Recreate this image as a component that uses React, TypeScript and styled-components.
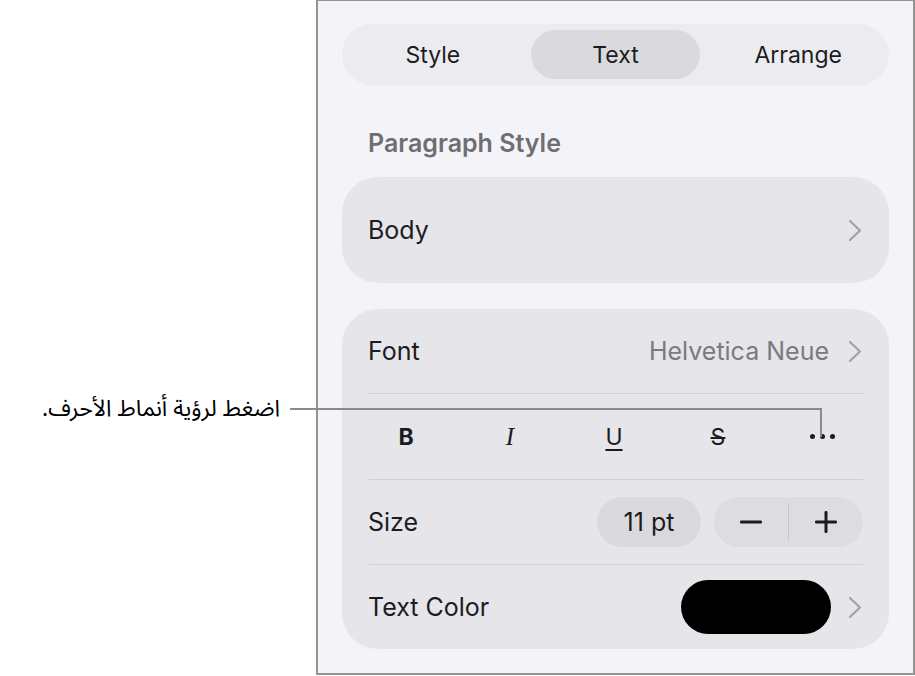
import React from "react";
import styled, { createGlobalStyle, css } from "styled-components";

const GlobalStyle = createGlobalStyle`
  html, body {
    margin: 0;
    padding: 0;
    background: #ffffff;
  }
  body {
    font-family: Inter, "Liberation Sans", sans-serif;
    color: #1c1c1e;
    -webkit-font-smoothing: antialiased;
  }
`;

const Page = styled.div`
  position: relative;
  display: flex;
  width: 915px;
  height: 676px;
  overflow: hidden;
`;

const CalloutColumn = styled.div`
  width: 316px;
  flex-shrink: 0;
  box-sizing: border-box;
  padding: 392px 36px 0 0;
`;

const CalloutText = styled.p`
  margin: 0;
  direction: rtl;
  text-align: right;
  font-family: "Noto Sans Arabic", "DejaVu Sans", sans-serif;
  font-size: 23px;
  line-height: 34px;
  color: #000000;
`;

// leader line from the callout to the "more" button
const Leader = styled.div`
  position: absolute;
  left: 290px;
  top: 408px;
  width: 530px;
  height: 27px;
  border-top: 2px solid #8a8a8a;
  border-right: 2px solid #8a8a8a;
`;

const Panel = styled.aside`
  width: 599px;
  height: 675px;
  box-sizing: border-box;
  border: 2px solid #939393;
  border-top-width: 1px;
  background: #f4f4f8;
  padding: 23px 24px 0;
  display: flex;
  flex-direction: column;
`;

const Segmented = styled.div`
  display: grid;
  grid-template-columns: repeat(3, 1fr);
  gap: 13px;
  height: 61px;
  box-sizing: border-box;
  padding: 6px;
  border-radius: 31px;
  background: #ececf0;
`;

const Segment = styled.div<{ $active?: boolean }>`
  display: flex;
  align-items: center;
  justify-content: center;
  border-radius: 25px;
  font-size: 23px;
  font-weight: 400;
  color: #1c1c1e;
  background: ${(p) => (p.$active ? "#d9d9de" : "transparent")};
`;

const SectionTitle = styled.h3`
  margin: 42px 0 18px 26px;
  font-size: 25px;
  line-height: 32px;
  font-weight: 600;
  color: #6e6e73;
`;

const Card = styled.div<{ $gapTop?: number }>`
  margin-top: ${(p) => p.$gapTop ?? 0}px;
  background: #e5e5ea;
  border-radius: 36px;
  overflow: hidden;
`;

const Row = styled.div<{ $height: number }>`
  display: flex;
  align-items: center;
  height: ${(p) => p.$height}px;
  padding: 0 27px 0 26px;
  font-size: 25px;
  color: #1c1c1e;
`;

const Label = styled.span`
  flex: 1;
`;

const Value = styled.span`
  color: #7a7a7f;
  margin-right: 19px;
`;

const Divider = styled.div`
  height: 1px;
  margin: 0 26px 0 27px;
  background: #d1d1d6;
`;

const FormatRow = styled.div`
  display: grid;
  grid-template-columns: repeat(5, 104px);
  align-items: center;
  justify-items: center;
  height: 85px;
  padding-left: 12px;
`;

const glyphVariants = {
  bold: css`
    font-family: Inter, "Liberation Sans", sans-serif;
    font-weight: 700;
    font-size: 23px;
  `,
  italic: css`
    font-family: "Liberation Serif", serif;
    font-style: italic;
    font-size: 25px;
  `,
  underline: css`
    font-family: Inter, "Liberation Sans", sans-serif;
    font-size: 23px;
    text-decoration: underline;
    text-decoration-thickness: 2px;
    text-underline-offset: 4px;
  `,
  strike: css`
    font-family: Inter, "Liberation Sans", sans-serif;
    font-size: 23px;
    text-decoration: line-through;
    text-decoration-thickness: 2px;
  `,
};

const Glyph = styled.span<{ $variant: keyof typeof glyphVariants }>`
  color: #1c1c1e;
  line-height: 30px;
  ${(p) => glyphVariants[p.$variant]}
`;

const Dots = styled.span`
  display: flex;
  gap: 5px;
  margin-top: 0;
`;

const Dot = styled.span`
  width: 5px;
  height: 5px;
  border-radius: 50%;
  background: #1c1c1e;
`;

const SizePill = styled.div`
  display: flex;
  align-items: center;
  justify-content: center;
  width: 104px;
  height: 50px;
  border-radius: 25px;
  background: #d9d9de;
  margin-right: 13px;
`;

const Stepper = styled.div`
  display: flex;
  align-items: center;
  width: 149px;
  height: 50px;
  border-radius: 25px;
  background: #dcdce1;
  margin-right: -1px;
`;

const StepButton = styled.div`
  flex: 1;
  display: flex;
  align-items: center;
  justify-content: center;
  height: 100%;
`;

const StepDivider = styled.div`
  width: 1px;
  height: 38px;
  background: #c4c4c9;
`;

const Swatch = styled.div<{ $color: string }>`
  width: 150px;
  height: 54px;
  border-radius: 27px;
  background: ${(p) => p.$color};
  margin-right: 17px;
`;

const Chevron = () => (
  <svg width="14" height="23" viewBox="0 0 14 23" fill="none">
    <polyline
      points="2,2 12,11.5 2,21"
      stroke="#a1a1a6"
      strokeWidth="2.2"
      strokeLinecap="round"
      strokeLinejoin="round"
    />
  </svg>
);

const Minus = () => (
  <svg width="22" height="22" viewBox="0 0 22 22">
    <rect x="0" y="9.5" width="22" height="3" rx="1.2" fill="#1c1c1e" />
  </svg>
);

const Plus = () => (
  <svg width="22" height="22" viewBox="0 0 22 22">
    <rect x="0" y="9.5" width="22" height="3" rx="1.2" fill="#1c1c1e" />
    <rect x="9.5" y="0" width="3" height="22" rx="1.2" fill="#1c1c1e" />
  </svg>
);

const App = () => {
  return (
    <Page>
      <GlobalStyle />
      <CalloutColumn>
        <CalloutText dir="rtl">اضغط لرؤية أنماط الأحرف.</CalloutText>
      </CalloutColumn>
      <Panel>
        <Segmented>
          <Segment>Style</Segment>
          <Segment $active>Text</Segment>
          <Segment>Arrange</Segment>
        </Segmented>

        <SectionTitle>Paragraph Style</SectionTitle>

        <Card>
          <Row $height={106}>
            <Label>Body</Label>
            <Chevron />
          </Row>
        </Card>

        <Card $gapTop={26}>
          <Row $height={84}>
            <Label>Font</Label>
            <Value>Helvetica Neue</Value>
            <Chevron />
          </Row>
          <Divider />
          <FormatRow>
            <Glyph $variant="bold">B</Glyph>
            <Glyph $variant="italic">I</Glyph>
            <Glyph $variant="underline">U</Glyph>
            <Glyph $variant="strike">S</Glyph>
            <Dots>
              <Dot />
              <Dot />
              <Dot />
            </Dots>
          </FormatRow>
          <Divider />
          <Row $height={84}>
            <Label>Size</Label>
            <SizePill>11 pt</SizePill>
            <Stepper>
              <StepButton>
                <Minus />
              </StepButton>
              <StepDivider />
              <StepButton>
                <Plus />
              </StepButton>
            </Stepper>
          </Row>
          <Divider />
          <Row $height={84}>
            <Label>Text Color</Label>
            <Swatch $color="#000000" />
            <Chevron />
          </Row>
        </Card>
      </Panel>
      <Leader />
    </Page>
  );
};

export default App;
